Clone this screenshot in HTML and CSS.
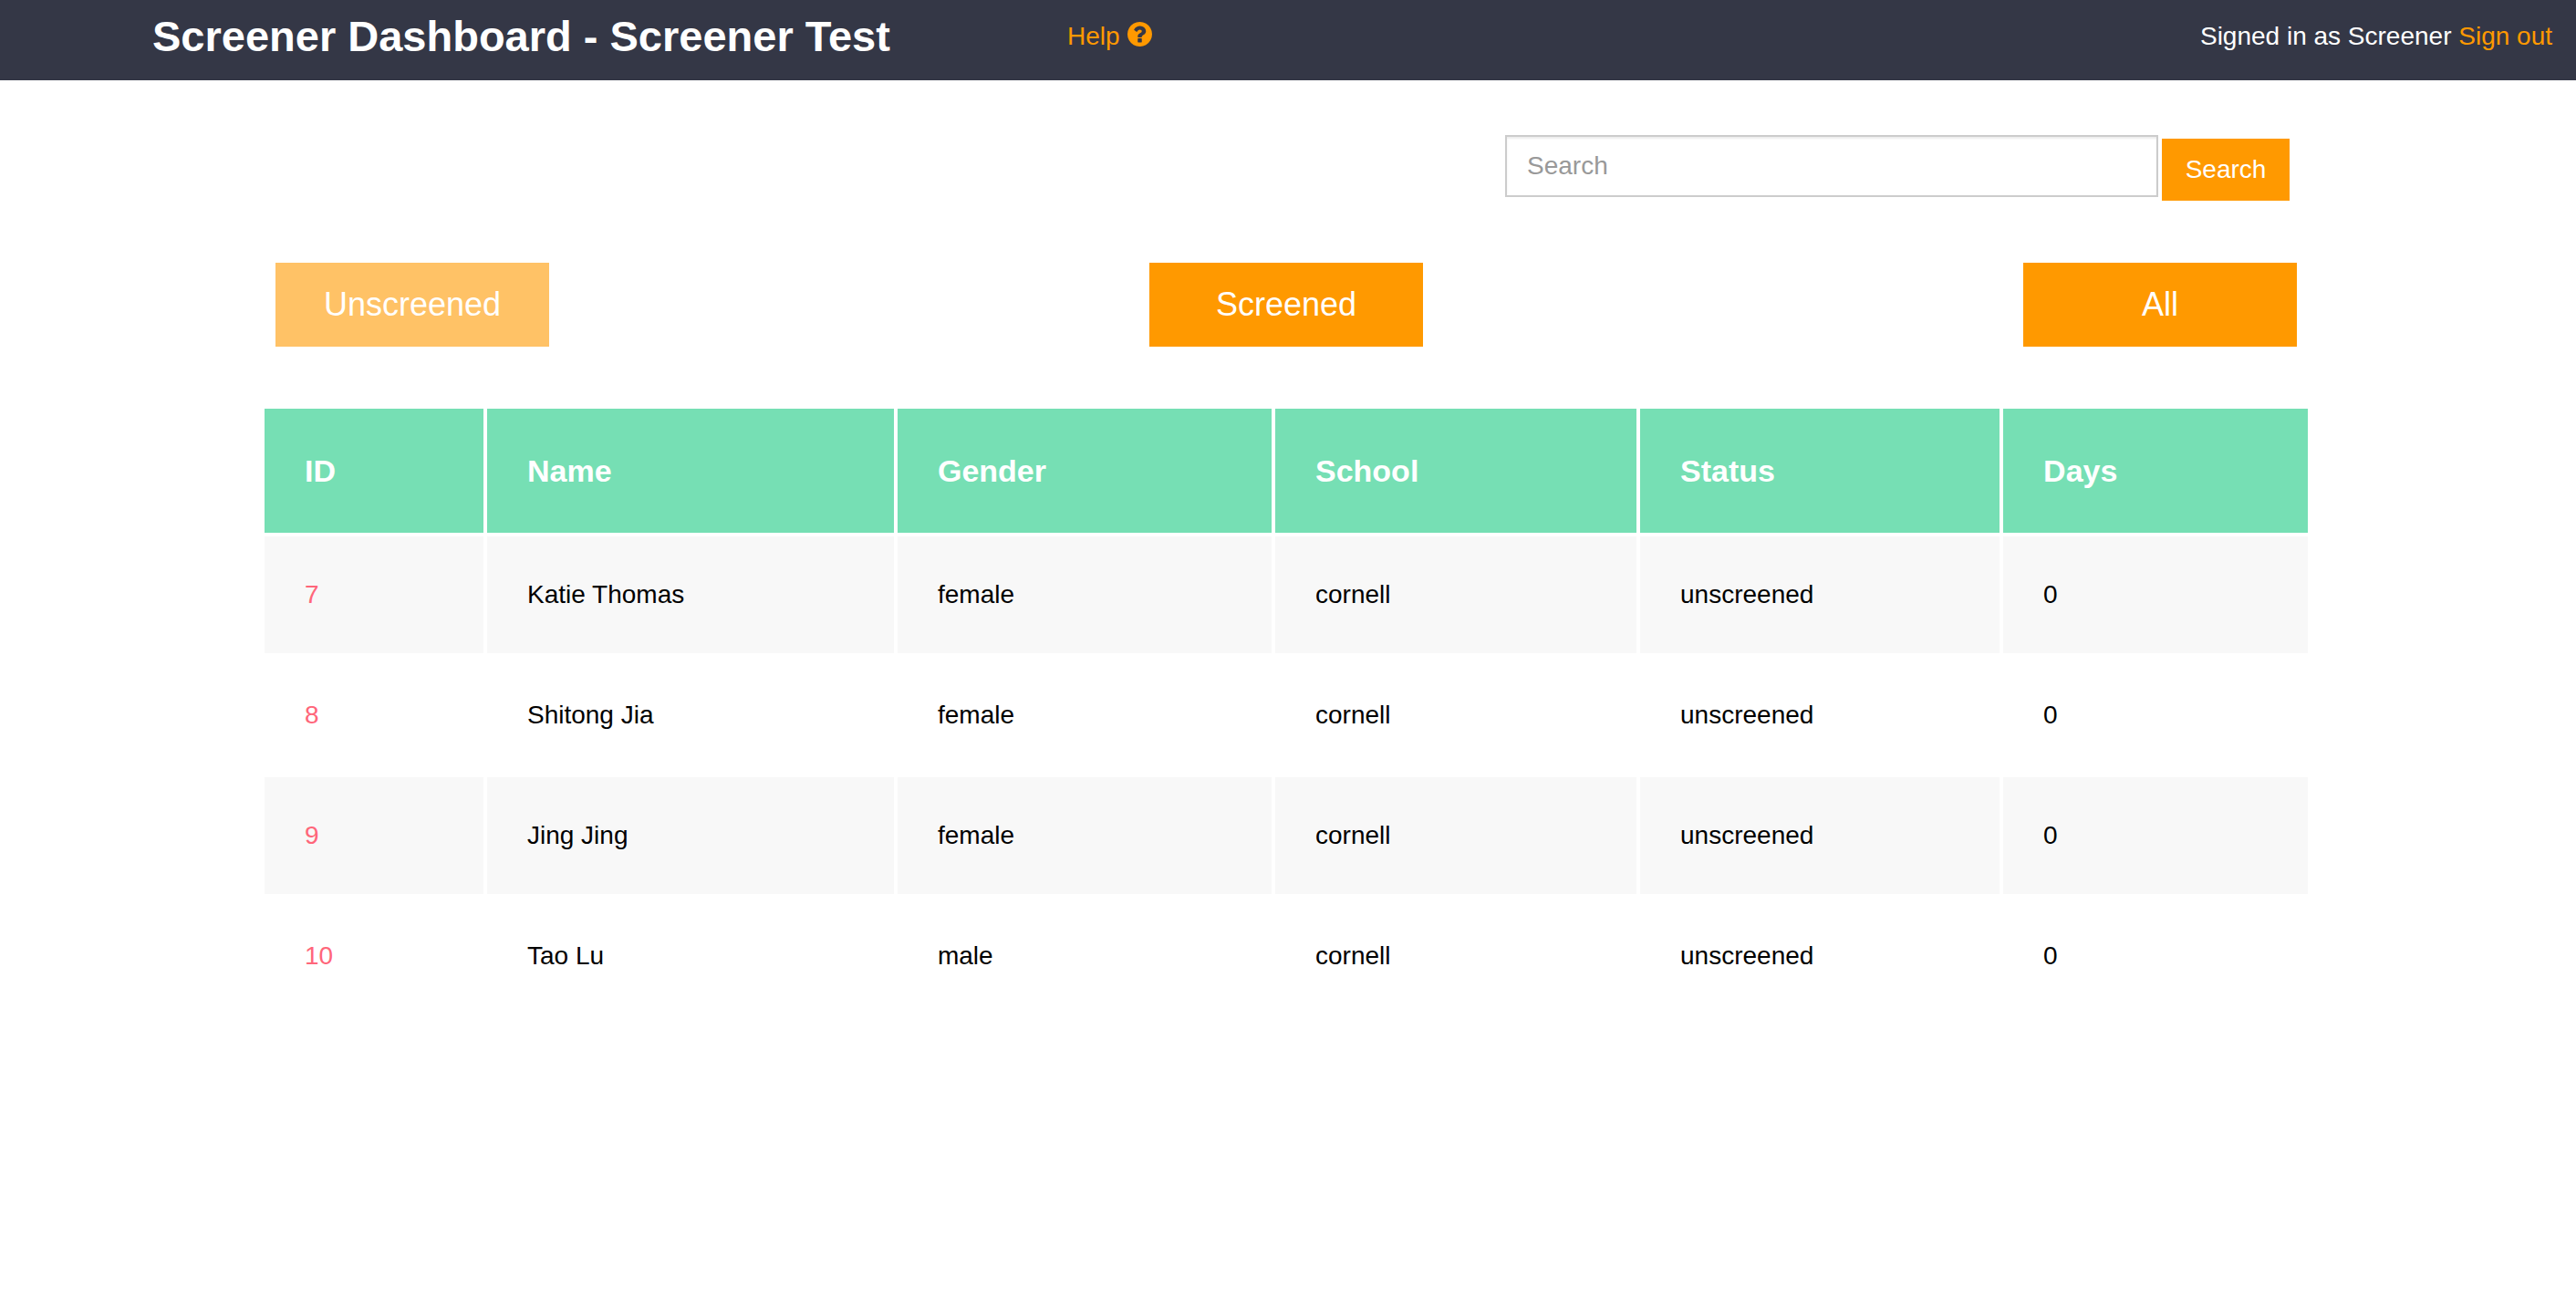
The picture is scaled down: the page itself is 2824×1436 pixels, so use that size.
FILE: index.html
```html
<!DOCTYPE html>
<html lang="en">
<head>
<meta charset="utf-8">
<title>Screener Dashboard</title>
<link rel="stylesheet" href="styles.css">
</head>
<body>
<header class="topbar">
  <h1 class="topbar-title">Screener Dashboard - Screener Test</h1>
  <nav class="topbar-nav">
    <a class="link" href="#help">Help <svg class="help-icon" viewBox="128 128 1536 1536" aria-hidden="true"><path fill="currentColor" d="M1024 1376v-192q0-14-9-23t-23-9h-192q-14 0-23 9t-9 23v192q0 14 9 23t23 9h192q14 0 23-9t9-23zm256-672q0-88-55.5-163t-138.500-116-170-41q-243 0-371 213-15 24 8 42l132 100q7 6 19 6 16 0 25-12 53-68 86-92 34-24 86-24 48 0 85.500 26t37.500 59q0 38-20 61t-68 45q-63 28-115.500 86.500t-52.500 125.500v36q0 14 9 23t23 9h192q14 0 23-9t9-23q0-19 21.500-49.500t54.500-49.500q32-18 49-28.500t46-35 44.500-48 28-60.500 12.500-81zm384 192q0 209-103 385.500t-279.500 279.500-385.500 103-385.500-103-279.500-279.500-103-385.500 103-385.500 279.500-279.500 385.500-103 385.500 103 279.500 279.500 103 385.500z"/></svg></a>
  </nav>
  <p class="topbar-user">Signed in as Screener <a class="link" href="#signout">Sign out</a></p>
</header>
<main class="content">
  <form class="search" role="search">
    <input class="search-input" type="text" placeholder="Search" aria-label="Search">
    <button class="btn search-btn" type="submit">Search</button>
  </form>
  <div class="filters">
    <button class="btn filter filter-active" type="button">Unscreened</button>
    <button class="btn filter" type="button">Screened</button>
    <button class="btn filter" type="button">All</button>
  </div>
  <table class="students">
    <colgroup>
      <col class="col-id"><col class="col-name"><col class="col-gender"><col class="col-school"><col class="col-status"><col class="col-days">
    </colgroup>
    <thead>
      <tr><th>ID</th><th>Name</th><th>Gender</th><th>School</th><th>Status</th><th>Days</th></tr>
    </thead>
    <tbody>
      <tr><td><a class="id-link" href="#7">7</a></td><td>Katie Thomas</td><td>female</td><td>cornell</td><td>unscreened</td><td>0</td></tr>
      <tr><td><a class="id-link" href="#8">8</a></td><td>Shitong Jia</td><td>female</td><td>cornell</td><td>unscreened</td><td>0</td></tr>
      <tr><td><a class="id-link" href="#9">9</a></td><td>Jing Jing</td><td>female</td><td>cornell</td><td>unscreened</td><td>0</td></tr>
      <tr><td><a class="id-link" href="#10">10</a></td><td>Tao Lu</td><td>male</td><td>cornell</td><td>unscreened</td><td>0</td></tr>
    </tbody>
  </table>
</main>
</body>
</html>
```
FILE: styles.css
```css
* {
  box-sizing: border-box;
}

body {
  margin: 0;
  background: #fff;
  color: #000;
  font-family: "Liberation Sans", Arial, sans-serif;
  font-size: 28px;
  line-height: 40px;
}

a {
  text-decoration: none;
}

.link {
  color: #ff9900;
}

/* Top bar */
.topbar {
  display: grid;
  grid-template-columns: 41.43% 1fr auto;
  padding-bottom: 8px;
  background: #343746;
  color: #fff;
  line-height: 80px;
}

.topbar-title {
  margin: 0;
  padding-left: 167px;
  font-size: 47px;
  font-weight: bold;
  white-space: nowrap;
}

.topbar-user {
  margin: 0;
  padding-right: 26px;
}

.help-icon {
  width: 27px;
  height: 27px;
  margin-left: 1px;
  vertical-align: -2px;
}

/* Page body */
.content {
  display: flex;
  flex-direction: column;
  padding: 60px 290px 60px 286px;
}

.btn {
  border: 0;
  padding: 0;
  background: #ff9900;
  color: #fff;
  font: inherit;
  cursor: pointer;
}

.search {
  display: flex;
  align-items: flex-start;
  align-self: flex-end;
  gap: 4px;
  width: 860px;
  max-width: 100%;
  margin-right: 24px;
}

.search-input {
  flex: 1;
  min-width: 0;
  height: 68px;
  padding: 0 22px;
  border: 2px solid #ccc;
  border-radius: 0;
  background: #fff;
  box-shadow: inset 0 2px 2px rgba(0, 0, 0, 0.075);
  color: #555;
  font: inherit;
}

.search-input::placeholder {
  color: #999;
}

.search-btn {
  width: 140px;
  height: 68px;
  margin-top: 4px;
}

.filters {
  display: flex;
  justify-content: space-between;
  margin: 68px 0 64px;
  padding: 0 16px;
}

.filter {
  width: 300px;
  height: 92px;
  font-size: 36px;
}

.filter-active {
  background: #ffc266;
}

/* Student table */
.students {
  width: 100%;
  table-layout: fixed;
  border-collapse: separate;
  border-spacing: 4px;
}

.col-id { width: 10.81%; }
.col-name { width: 20.09%; }
.col-gender { width: 18.47%; }
.col-school { width: 17.84%; }
.col-status { width: 17.75%; }

th,
td {
  padding: 44px;
  text-align: left;
}

th {
  background: #76dfb4;
  color: #fff;
  font-size: 34px;
  line-height: 48px;
}

tbody tr:nth-child(odd) td {
  background: #f8f8f8;
}

.id-link {
  color: #ff667a;
}
```
